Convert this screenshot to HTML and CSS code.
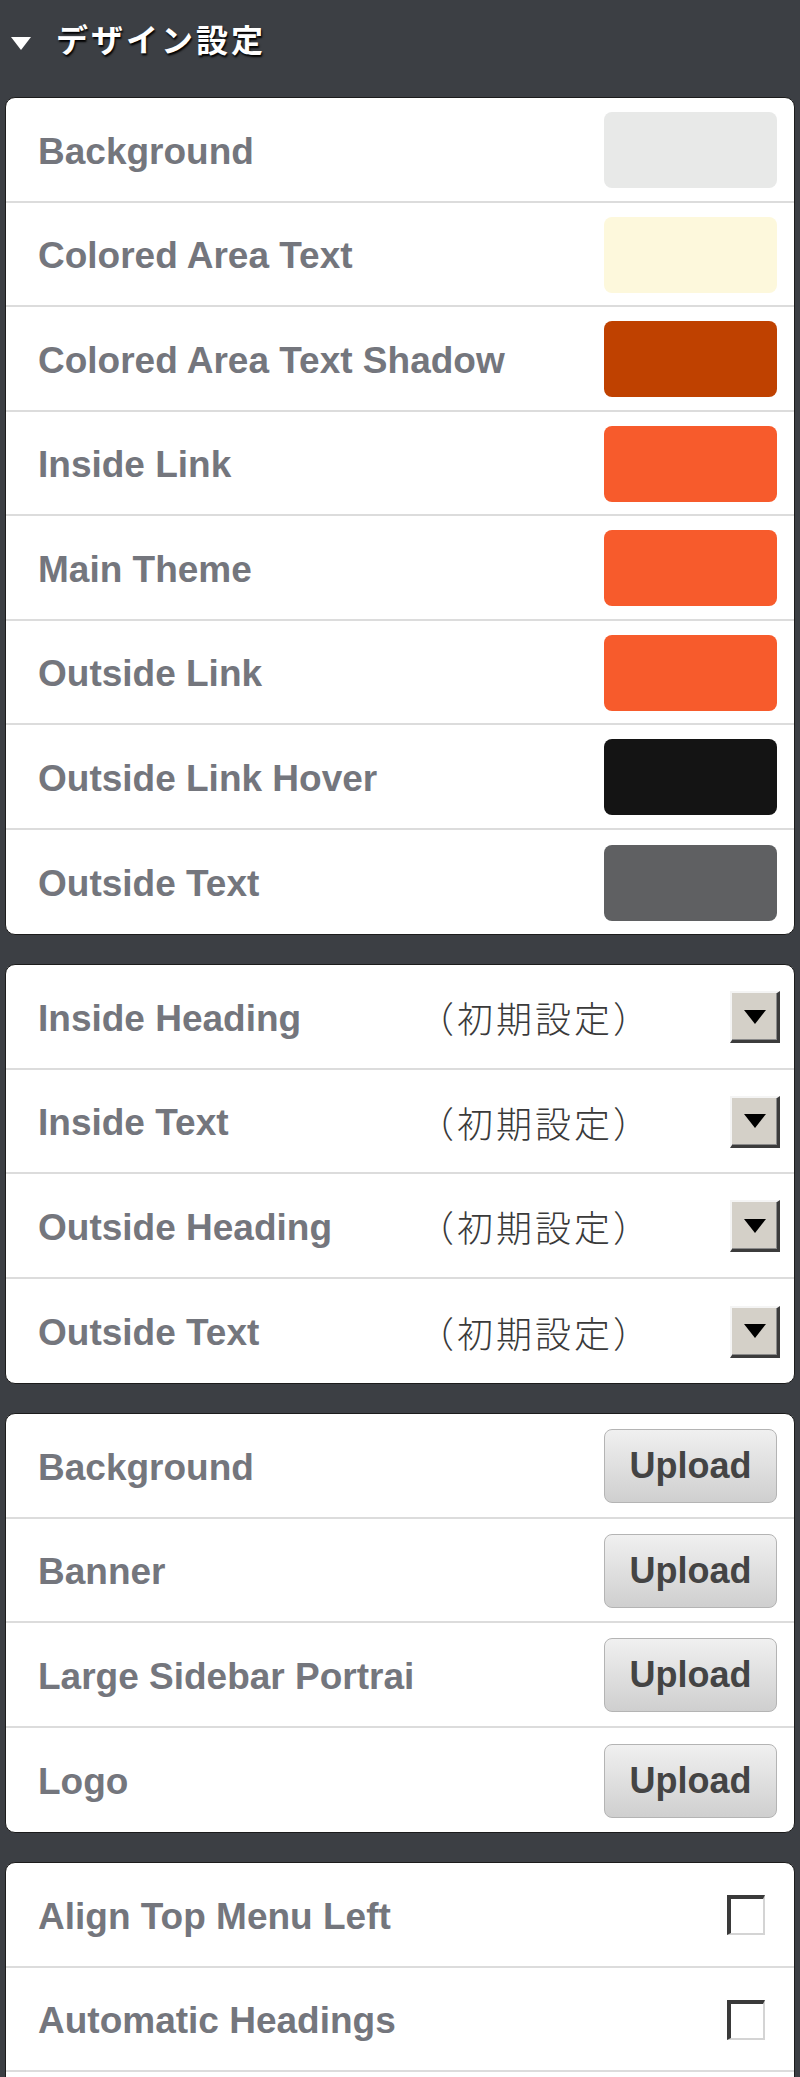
FILE: index.html
```html
<!DOCTYPE html>
<html lang="ja">
<head>
  <meta charset="UTF-8" />
  <meta name="viewport" content="width=device-width, initial-scale=1.0" />
  <title>デザイン設定</title>
  <link rel="stylesheet" href="styles.css">
</head>
<body>
  <div class="panel-title"><span class="arrow"></span>デザイン設定</div>

  <div class="group">
    <div class="row"><span class="label">Background</span><span class="swatch" style="background:#e8e9e8"></span></div>
    <div class="row"><span class="label">Colored Area Text</span><span class="swatch" style="background:#fdf8dc"></span></div>
    <div class="row"><span class="label">Colored Area Text Shadow</span><span class="swatch" style="background:#bf4100"></span></div>
    <div class="row"><span class="label">Inside Link</span><span class="swatch" style="background:#f75b2c"></span></div>
    <div class="row"><span class="label">Main Theme</span><span class="swatch" style="background:#f75b2c"></span></div>
    <div class="row"><span class="label">Outside Link</span><span class="swatch" style="background:#f75b2c"></span></div>
    <div class="row"><span class="label">Outside Link Hover</span><span class="swatch" style="background:#141414"></span></div>
    <div class="row"><span class="label">Outside Text</span><span class="swatch" style="background:#5f6062"></span></div>
  </div>

  <div class="group">
    <div class="row font-row"><span class="label">Inside Heading</span><span class="default">（初期設定）</span><span class="drop"></span></div>
    <div class="row font-row"><span class="label">Inside Text</span><span class="default">（初期設定）</span><span class="drop"></span></div>
    <div class="row font-row"><span class="label">Outside Heading</span><span class="default">（初期設定）</span><span class="drop"></span></div>
    <div class="row font-row"><span class="label">Outside Text</span><span class="default">（初期設定）</span><span class="drop"></span></div>
  </div>

  <div class="group">
    <div class="row"><span class="label">Background</span><button class="upload">Upload</button></div>
    <div class="row"><span class="label">Banner</span><button class="upload">Upload</button></div>
    <div class="row"><span class="label">Large Sidebar Portrai</span><button class="upload">Upload</button></div>
    <div class="row"><span class="label">Logo</span><button class="upload">Upload</button></div>
  </div>

  <div class="group">
    <div class="row check-row"><span class="label">Align Top Menu Left</span><span class="check"></span></div>
    <div class="row check-row"><span class="label">Automatic Headings</span><span class="check"></span></div>
    <div class="row check-row"></div>
  </div>
</body>
</html>
```

FILE: styles.css
```css
* { box-sizing: border-box; }
body {
  margin: 0;
  background: #3c3f44;
  font-family: 'Liberation Sans', Arial, sans-serif;
}

.panel-title {
  height: 97px;
  padding: 16px 0 0 11px;
  display: flex;
  align-items: flex-start;
  line-height: 44px;
  color: #fff;
  font-family: 'Noto Sans CJK JP', sans-serif;
  font-weight: bold;
  font-size: 32px;
  letter-spacing: 3px;
  text-shadow: 1px 2px 2px #000;
}

.arrow {
  width: 0;
  height: 0;
  margin: 21px 25px 0 0;
  border-left: 10px solid transparent;
  border-right: 10px solid transparent;
  border-top: 13px solid #fff;
}

.group {
  margin: 0 5px 29px;
  background: #fff;
  border: 1px solid #1c1c1c;
  border-radius: 10px;
  overflow: hidden;
}

.row {
  height: 104.5px;
  padding: 2px 17px 0 32px;
  display: flex;
  align-items: center;
  justify-content: space-between;
  border-bottom: 2px solid #dcdcdc;
}

.row:last-child {
  border-bottom: none;
}

.label {
  padding-top: 3px;
  color: #74767d;
  font-size: 37px;
  font-weight: bold;
  white-space: nowrap;
}

.swatch {
  width: 173px;
  height: 76px;
  border-radius: 8px;
}

.font-row {
  display: grid;
  grid-template-columns: 399px 1fr auto;
  align-items: center;
  padding-right: 14px;
}

.default {
  margin-left: -19px;
  color: #3a3a3a;
  font-family: 'Noto Sans CJK JP', sans-serif;
  font-size: 36px;
  font-weight: 300;
  letter-spacing: 3px;
  text-spacing-trim: space-all;
  white-space: nowrap;
}

.drop {
  position: relative;
  width: 50px;
  height: 52px;
  background: #d4d0c8;
  border-style: solid;
  border-width: 2px 3px 3px 2px;
  border-color: #f4f4f4 #3c3c3c #3c3c3c #f4f4f4;
  box-shadow: inset -1px -1px 0 #8a8a8a;
}

.drop::after {
  content: "";
  position: absolute;
  left: 50%;
  top: 50%;
  margin: -7px 0 0 -11px;
  border-left: 11px solid transparent;
  border-right: 11px solid transparent;
  border-top: 14px solid #000;
}

.upload {
  width: 173px;
  height: 74px;
  padding: 0;
  border: 1px solid #b4b4b4;
  border-radius: 8px;
  background: linear-gradient(#f0f0f0, #cfcfcf);
  color: #444;
  font-family: 'Liberation Sans', Arial, sans-serif;
  font-size: 36px;
  font-weight: bold;
}

.check-row {
  padding-right: 29px;
}

.check {
  width: 38px;
  height: 40px;
  background: #fff;
  border-style: solid;
  border-width: 4px 2px 2px 4px;
  border-color: #3a3a3a #d4d4d4 #d4d4d4 #3a3a3a;
}
```
